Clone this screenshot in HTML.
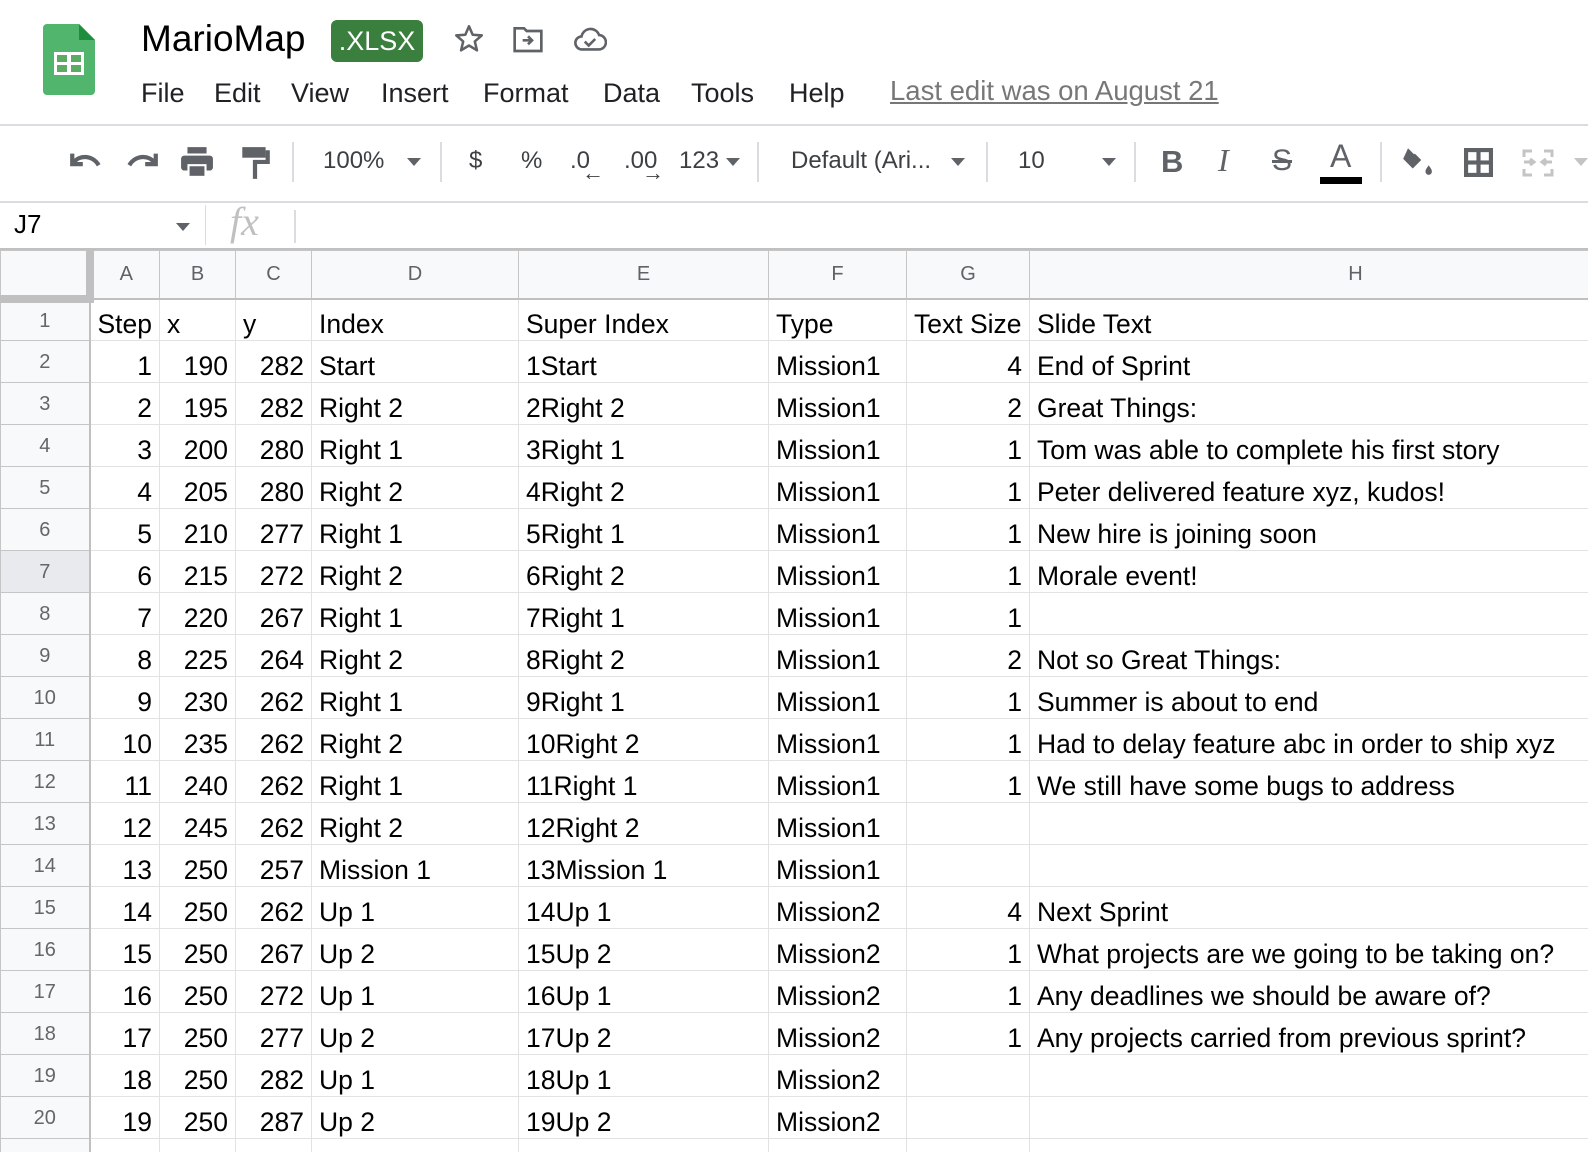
<!DOCTYPE html>
<html><head><meta charset="utf-8">
<style>
*{margin:0;padding:0;box-sizing:border-box}
body{width:1588px;height:1152px;overflow:hidden;background:#fff;font-family:"Liberation Sans",Arial,sans-serif;position:relative;color:#000}
.a{position:absolute}
.menu span{position:absolute;top:78px;font-size:27px;color:#202124}
.tb{color:#3c4043;font-size:24px;top:147px}
.sep{position:absolute;top:142px;width:2px;height:40px;background:#dadce0}
.wrap{position:absolute;left:0;top:250px;width:1588px;height:902px;overflow:hidden}
table{position:absolute;left:0;top:0;width:1681px;border-collapse:collapse;table-layout:fixed}
td{height:42px;border:1px solid #e2e2e2;font-size:26.5px;padding:0 7px;white-space:nowrap;overflow:visible;vertical-align:bottom;padding-bottom:1px;line-height:30px}
td.r{text-align:right}
tr.hd td{height:48px;background:#f8f9fa;color:#5f6368;font-size:20px;text-align:center;vertical-align:middle;padding:0;border-color:#c6c6c6;border-bottom:2px solid #c0c0c0}
td.rh{background:#f8f9fa;color:#666;font-size:20px;text-align:center;vertical-align:middle;padding:0;border-color:#c6c6c6;border-right:2px solid #c0c0c0}
td.sel{background:#e8eaed}
</style></head><body>
<svg class="a" style="left:43px;top:24px" width="52" height="71" viewBox="0 0 52 71"><path d="M4 0H36L52 16V67a4 4 0 0 1-4 4H4a4 4 0 0 1-4-4V4a4 4 0 0 1 4-4z" fill="#34a853" opacity=".85"/><path d="M36 0L52 16H36z" fill="#1e8e3e"/><rect x="11" y="28" width="30" height="23" fill="#fff"/><rect x="14" y="31" width="10" height="7" fill="#5bab62"/><rect x="28" y="31" width="10" height="7" fill="#5bab62"/><rect x="14" y="41" width="10" height="7" fill="#5bab62"/><rect x="28" y="41" width="10" height="7" fill="#5bab62"/></svg>
<div class="a" style="left:141px;top:18px;font-size:37px;color:#000">MarioMap</div>
<div class="a" style="left:331px;top:20px;width:92px;height:42px;background:#3b7f3f;border-radius:6px;color:#fff;font-size:27px;text-align:center;line-height:42px">.XLSX</div>
<svg class="a" style="left:452px;top:22px" width="34" height="34" viewBox="0 0 24 24"><path d="M12 3l2.6 6 6.4.5-4.9 4.2 1.5 6.3L12 16.6 6.4 20l1.5-6.3L3 9.5 9.4 9z" fill="none" stroke="#5f6368" stroke-width="1.8" stroke-linejoin="round"/></svg>
<svg class="a" style="left:512px;top:24px" width="32" height="30" viewBox="0 0 24 22"><path d="M2 3h7l2 2h11v15H2z" fill="none" stroke="#5f6368" stroke-width="2"/><path d="M8 12h7M12 9l3 3-3 3" fill="none" stroke="#5f6368" stroke-width="2"/></svg>
<svg class="a" style="left:573px;top:26px" width="34" height="26" viewBox="0 0 26 20"><path d="M7 18a5 5 0 0 1-.5-10A7 7 0 0 1 20 7a5 5 0 0 1-.5 11z" fill="none" stroke="#5f6368" stroke-width="2"/><path d="M9 12l3 3 5-5" fill="none" stroke="#5f6368" stroke-width="2"/></svg>
<div class="menu">
<span style="left:141px">File</span><span style="left:214px">Edit</span><span style="left:291px">View</span><span style="left:381px">Insert</span><span style="left:483px">Format</span><span style="left:603px">Data</span><span style="left:691px">Tools</span><span style="left:789px">Help</span>
</div>
<div class="a" style="left:890px;top:75px;font-size:27.5px;color:#777;text-decoration:underline">Last edit was on August 21</div>
<div class="a" style="left:0;top:124px;width:1588px;height:2px;background:#dadce0"></div>
<svg class="a" style="left:68px;top:148px" width="36" height="26" viewBox="0 0 34 22"><path d="M4 4v10h10" fill="none" stroke="#5f6368" stroke-width="4"/><path d="M5 13c5-8 18-8 24 2" fill="none" stroke="#5f6368" stroke-width="4"/></svg>
<svg class="a" style="left:124px;top:148px" width="36" height="26" viewBox="0 0 34 22"><path d="M30 4v10H20" fill="none" stroke="#5f6368" stroke-width="4"/><path d="M29 13c-5-8-18-8-24 2" fill="none" stroke="#5f6368" stroke-width="4"/></svg>
<svg class="a" style="left:180px;top:145px" width="34" height="34" viewBox="0 0 32 32"><rect x="7" y="2" width="18" height="6" fill="#5f6368"/><rect x="1" y="10" width="30" height="14" rx="3" fill="#5f6368"/><rect x="8" y="19" width="16" height="11" fill="#5f6368" stroke="#fff" stroke-width="2"/></svg>
<svg class="a" style="left:240px;top:145px" width="30" height="36" viewBox="0 0 28 34"><rect x="2" y="2" width="22" height="10" fill="#5f6368"/><path d="M24 7h2v9H14v16" fill="none" stroke="#5f6368" stroke-width="4"/></svg>
<div class="sep" style="left:292px"></div>
<div class="a tb" style="left:323px">100%</div>
<div class="a" style="left:407px;top:158px;border:7px solid transparent;border-top:8px solid #5f6368;border-bottom:0"></div>
<div class="sep" style="left:440px"></div>
<div class="a tb" style="left:469px">$</div>
<div class="a tb" style="left:521px">%</div>
<div class="a tb" style="left:570px">.0</div><div class="a tb" style="left:582px;top:160px;font-size:22px;font-weight:bold">←</div>
<div class="a tb" style="left:624px">.00</div><div class="a tb" style="left:642px;top:160px;font-size:22px;font-weight:bold">→</div>
<div class="a tb" style="left:679px">123</div>
<div class="a" style="left:726px;top:158px;border:7px solid transparent;border-top:8px solid #5f6368;border-bottom:0"></div>
<div class="sep" style="left:757px"></div>
<div class="a tb" style="left:791px">Default (Ari...</div>
<div class="a" style="left:951px;top:158px;border:7px solid transparent;border-top:8px solid #5f6368;border-bottom:0"></div>
<div class="sep" style="left:986px"></div>
<div class="a tb" style="left:1018px">10</div>
<div class="a" style="left:1102px;top:158px;border:7px solid transparent;border-top:8px solid #5f6368;border-bottom:0"></div>
<div class="sep" style="left:1134px"></div>
<div class="a tb" style="left:1161px;font-size:31px;font-weight:bold;top:144px;color:#5f6368">B</div>
<div class="a tb" style="left:1218px;font-size:32px;font-style:italic;font-family:'Liberation Serif',serif;top:142px;color:#5f6368">I</div>
<div class="a tb" style="left:1272px;font-size:30px;text-decoration:line-through;top:144px;color:#5f6368">S</div>
<div class="a tb" style="left:1330px;font-size:32px;top:138px;color:#5f6368">A</div>
<div class="a" style="left:1320px;top:177px;width:42px;height:7px;background:#000"></div>
<div class="sep" style="left:1380px"></div>
<svg class="a" style="left:1400px;top:145px" width="34" height="32" viewBox="0 0 32 30"><path d="M8 2l12 12-8 8-9-9z" fill="#5f6368"/><path d="M8 2l6 6" stroke="#fff" stroke-width="2"/><path d="M27 19c-2 3-3 4-3 6a3 3 0 0 0 6 0c0-2-1-3-3-6z" fill="#5f6368"/></svg>
<svg class="a" style="left:1464px;top:148px" width="29" height="29" viewBox="0 0 28 28"><rect x="0" y="0" width="28" height="28" fill="#5f6368"/><rect x="4" y="4" width="8" height="8" fill="#fff"/><rect x="16" y="4" width="8" height="8" fill="#fff"/><rect x="4" y="16" width="8" height="8" fill="#fff"/><rect x="16" y="16" width="8" height="8" fill="#fff"/></svg>
<svg class="a" style="left:1522px;top:149px" width="32" height="28" viewBox="0 0 32 28"><path d="M2 8V2h8M22 2h8v6M2 20v6h8M22 26h8v-6M2 13h10M20 13h10M8 10l4 3-4 3M24 10l-4 3 4 3" fill="none" stroke="#c4c4c4" stroke-width="3"/></svg>
<div class="a" style="left:1574px;top:158px;border:7px solid transparent;border-top:8px solid #c4c4c4;border-bottom:0"></div>
<div class="a" style="left:0;top:201px;width:1588px;height:2px;background:#dadce0"></div>
<div class="a" style="left:14px;top:209px;font-size:26px">J7</div>
<div class="a" style="left:176px;top:223px;border:7px solid transparent;border-top:8px solid #5f6368;border-bottom:0"></div>
<div class="a" style="left:205px;top:205px;width:1px;height:40px;background:#dadce0"></div>
<div class="a" style="left:230px;top:198px;font-size:40px;font-style:italic;font-family:'Liberation Serif',serif;color:#c0c0c0">fx</div>
<div class="a" style="left:294px;top:210px;width:2px;height:33px;background:#dadce0"></div>
<div class="a" style="left:0;top:248px;width:1588px;height:2px;background:#c0c0c0"></div>
<div class="wrap">
<table>
<colgroup><col style="width:89px"><col style="width:70px"><col style="width:76px"><col style="width:76px"><col style="width:207px"><col style="width:250px"><col style="width:138px"><col style="width:123px"><col style="width:652px"></colgroup>
<tr class="hd"><td style="background:#f8f9fa;border-right:8px solid #c0c0c0;border-bottom:8px solid #c0c0c0"></td><td>A</td><td>B</td><td>C</td><td>D</td><td>E</td><td>F</td><td>G</td><td>H</td></tr>
<tr><td class="rh">1</td><td>Step</td><td>x</td><td>y</td><td>Index</td><td>Super Index</td><td>Type</td><td>Text Size</td><td>Slide Text</td></tr>
<tr><td class="rh">2</td><td class="r">1</td><td class="r">190</td><td class="r">282</td><td>Start</td><td>1Start</td><td>Mission1</td><td class="r">4</td><td>End of Sprint</td></tr>
<tr><td class="rh">3</td><td class="r">2</td><td class="r">195</td><td class="r">282</td><td>Right 2</td><td>2Right 2</td><td>Mission1</td><td class="r">2</td><td>Great Things:</td></tr>
<tr><td class="rh">4</td><td class="r">3</td><td class="r">200</td><td class="r">280</td><td>Right 1</td><td>3Right 1</td><td>Mission1</td><td class="r">1</td><td>Tom was able to complete his first story</td></tr>
<tr><td class="rh">5</td><td class="r">4</td><td class="r">205</td><td class="r">280</td><td>Right 2</td><td>4Right 2</td><td>Mission1</td><td class="r">1</td><td>Peter delivered feature xyz, kudos!</td></tr>
<tr><td class="rh">6</td><td class="r">5</td><td class="r">210</td><td class="r">277</td><td>Right 1</td><td>5Right 1</td><td>Mission1</td><td class="r">1</td><td>New hire is joining soon</td></tr>
<tr><td class="rh sel">7</td><td class="r">6</td><td class="r">215</td><td class="r">272</td><td>Right 2</td><td>6Right 2</td><td>Mission1</td><td class="r">1</td><td>Morale event!</td></tr>
<tr><td class="rh">8</td><td class="r">7</td><td class="r">220</td><td class="r">267</td><td>Right 1</td><td>7Right 1</td><td>Mission1</td><td class="r">1</td><td></td></tr>
<tr><td class="rh">9</td><td class="r">8</td><td class="r">225</td><td class="r">264</td><td>Right 2</td><td>8Right 2</td><td>Mission1</td><td class="r">2</td><td>Not so Great Things:</td></tr>
<tr><td class="rh">10</td><td class="r">9</td><td class="r">230</td><td class="r">262</td><td>Right 1</td><td>9Right 1</td><td>Mission1</td><td class="r">1</td><td>Summer is about to end</td></tr>
<tr><td class="rh">11</td><td class="r">10</td><td class="r">235</td><td class="r">262</td><td>Right 2</td><td>10Right 2</td><td>Mission1</td><td class="r">1</td><td>Had to delay feature abc in order to ship xyz</td></tr>
<tr><td class="rh">12</td><td class="r">11</td><td class="r">240</td><td class="r">262</td><td>Right 1</td><td>11Right 1</td><td>Mission1</td><td class="r">1</td><td>We still have some bugs to address</td></tr>
<tr><td class="rh">13</td><td class="r">12</td><td class="r">245</td><td class="r">262</td><td>Right 2</td><td>12Right 2</td><td>Mission1</td><td class="r"></td><td></td></tr>
<tr><td class="rh">14</td><td class="r">13</td><td class="r">250</td><td class="r">257</td><td>Mission 1</td><td>13Mission 1</td><td>Mission1</td><td class="r"></td><td></td></tr>
<tr><td class="rh">15</td><td class="r">14</td><td class="r">250</td><td class="r">262</td><td>Up 1</td><td>14Up 1</td><td>Mission2</td><td class="r">4</td><td>Next Sprint</td></tr>
<tr><td class="rh">16</td><td class="r">15</td><td class="r">250</td><td class="r">267</td><td>Up 2</td><td>15Up 2</td><td>Mission2</td><td class="r">1</td><td>What projects are we going to be taking on?</td></tr>
<tr><td class="rh">17</td><td class="r">16</td><td class="r">250</td><td class="r">272</td><td>Up 1</td><td>16Up 1</td><td>Mission2</td><td class="r">1</td><td>Any deadlines we should be aware of?</td></tr>
<tr><td class="rh">18</td><td class="r">17</td><td class="r">250</td><td class="r">277</td><td>Up 2</td><td>17Up 2</td><td>Mission2</td><td class="r">1</td><td>Any projects carried from previous sprint?</td></tr>
<tr><td class="rh">19</td><td class="r">18</td><td class="r">250</td><td class="r">282</td><td>Up 1</td><td>18Up 1</td><td>Mission2</td><td class="r"></td><td></td></tr>
<tr><td class="rh">20</td><td class="r">19</td><td class="r">250</td><td class="r">287</td><td>Up 2</td><td>19Up 2</td><td>Mission2</td><td class="r"></td><td></td></tr>
<tr><td class="rh">21</td><td></td><td></td><td></td><td></td><td></td><td></td><td></td><td></td></tr>
</table>
</div>
</body></html>
